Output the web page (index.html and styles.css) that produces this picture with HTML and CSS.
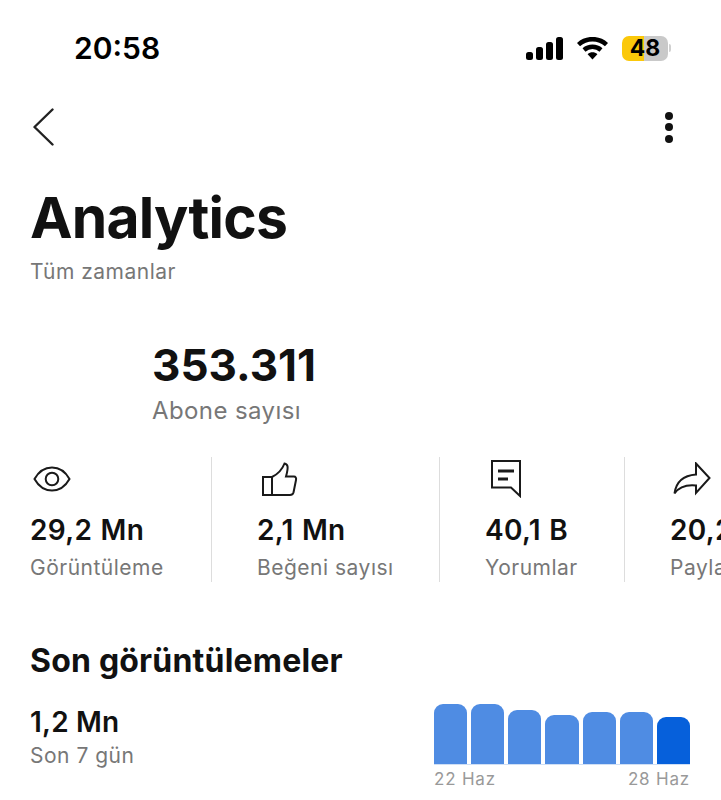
FILE: index.html
```html
<!DOCTYPE html>
<html lang="tr">
<head>
    <meta charset="UTF-8">
    <meta name="viewport" content="width=device-width, initial-scale=1.0">
    <title>Analytics</title>
    <link rel="stylesheet" href="styles.css">
</head>
<body>
    <div class="screen">
        <div class="status-bar">
            <span class="time">20:58</span>
            <div class="status-icons">
                <svg class="signal" width="37" height="23" viewBox="0 0 37 23">
                    <rect x="0" y="15" width="7" height="8" rx="2.5"/>
                    <rect x="10" y="10" width="7" height="13" rx="2.5"/>
                    <rect x="20" y="5" width="7" height="18" rx="2.5"/>
                    <rect x="30" y="0" width="7" height="23" rx="2.5"/>
                </svg>
                <svg class="wifi" width="31" height="23" viewBox="0 0 31 23">
                    <path d="M1.5 7.6C9.5 0.3 21.5 0.3 29.5 7.6" />
                    <path d="M7 13C11.8 8.8 19.2 8.8 24 13" />
                    <path class="wifi-tip" d="M10.6 17.2C13.5 14.6 17.5 14.6 20.4 17.2L15.5 22.6Z" />
                </svg>
                <div class="battery">
                    <div class="battery-body"><span class="battery-level">48</span></div>
                    <div class="battery-cap"></div>
                </div>
            </div>
        </div>

        <div class="nav-bar">
            <svg width="22" height="38" viewBox="0 0 22 38" class="back">
                <path d="M20.5 1.5L2.5 19L20.5 36.5" />
            </svg>
            <div class="more"><i></i><i></i><i></i></div>
        </div>

        <h1>Analytics</h1>
        <p class="subtitle">Tüm zamanlar</p>

        <div class="subs">
            <div class="subs-count">353.311</div>
            <div class="subs-label">Abone sayısı</div>
        </div>

        <div class="stats">
            <div class="stat">
                <div class="stat-icon icon-views">
                    <svg width="38" height="26" viewBox="0 0 38 26" class="icon">
                        <path d="M1.500 13C6 5 12 1.500 19 1.500C26 1.500 32 5 36.500 13C32 21 26 24.500 19 24.500C12 24.500 6 21 1.500 13Z" />
                        <circle cx="19" cy="13" r="6.300" />
                    </svg>
                </div>
                <div class="stat-value">29,2 Mn</div>
                <div class="stat-label">Görüntüleme</div>
            </div>
            <div class="stat">
                <div class="stat-icon icon-likes">
                    <svg width="36" height="34" viewBox="0 0 36 34" class="icon">
                        <path d="M1 15H10V33H1Z" />
                        <path d="M10 15C14 13 20 8 22.500 1.500C25.500 2 27 4 24 14.500H32C33.500 14.500 34.500 16 34 18L31.500 30.500C31 32 30 33 28 33H10" />
                    </svg>
                </div>
                <div class="stat-value">2,1 Mn</div>
                <div class="stat-label">Beğeni sayısı</div>
            </div>
            <div class="stat">
                <div class="stat-icon icon-comments">
                    <svg width="32" height="38" viewBox="0 0 32 38" class="icon">
                        <path d="M2 1H30V36L21 27.500H2Z" />
                        <path class="comment-line" d="M8 11H24M8 19H18" />
                    </svg>
                </div>
                <div class="stat-value">40,1 B</div>
                <div class="stat-label">Yorumlar</div>
            </div>
            <div class="stat">
                <div class="stat-icon icon-shares">
                    <svg width="38" height="34" viewBox="0 0 38 34" class="icon">
                        <path d="M23 1.500L36.500 16L23 31V23.500C13 22.500 6 25 1.500 31.500C3 20 10 13.500 23 12.500Z" />
                    </svg>
                </div>
                <div class="stat-value">20,2 B</div>
                <div class="stat-label">Paylaşımlar</div>
            </div>
        </div>

        <h2>Son görüntülemeler</h2>
        <div class="recent">
            <div class="recent-info">
                <div class="recent-value">1,2 Mn</div>
                <div class="recent-label">Son 7 gün</div>
            </div>
            <div class="chart">
                <div class="bars">
                    <div class="bar" style="height: 60px"></div>
                    <div class="bar" style="height: 60px"></div>
                    <div class="bar" style="height: 54px"></div>
                    <div class="bar" style="height: 49px"></div>
                    <div class="bar" style="height: 52px"></div>
                    <div class="bar" style="height: 52px"></div>
                    <div class="bar current" style="height: 47px"></div>
                </div>
                <div class="chart-dates">
                    <span>22 Haz</span>
                    <span>28 Haz</span>
                </div>
            </div>
        </div>
    </div>
</body>
</html>
```

FILE: styles.css
```css
* {
    margin: 0;
    padding: 0;
    box-sizing: border-box;
}

body {
    font-family: Inter, "Liberation Sans", sans-serif;
    background: #fff;
    color: #111;
    overflow: hidden;
}

.screen {
    width: 721px;
    height: 800px;
    overflow: hidden;
}

.status-bar {
    display: flex;
    align-items: center;
    justify-content: space-between;
    height: 96px;
    padding: 0 50px 0 74px;
}

.time {
    font-size: 30px;
    font-weight: 600;
    color: #000;
}

.status-icons {
    display: flex;
    align-items: center;
    gap: 14px;
}

.signal {
    fill: #000;
}

.wifi path {
    fill: none;
    stroke: #000;
    stroke-width: 4.5;
}

.wifi .wifi-tip {
    fill: #000;
    stroke: none;
}

.battery {
    display: flex;
    align-items: center;
    gap: 1px;
}

.battery-body {
    width: 46px;
    height: 25px;
    border-radius: 7px;
    background: linear-gradient(90deg, #fbc80a 0 48%, #c9c9c9 48% 100%);
    text-align: center;
}

.battery-level {
    font-size: 23px;
    line-height: 25px;
    font-weight: 700;
    color: #000;
    display: block;
}

.battery-cap {
    width: 2px;
    height: 8px;
    border-radius: 0 2px 2px 0;
    background: #d0d0d0;
}

.nav-bar {
    display: flex;
    align-items: center;
    justify-content: space-between;
    height: 62px;
    padding: 0 48px 0 32px;
}

.back path {
    fill: none;
    stroke: #222;
    stroke-width: 2.4;
    stroke-linecap: round;
    stroke-linejoin: round;
}

.more {
    display: flex;
    flex-direction: column;
    gap: 3.500px;
}

.more i {
    display: block;
    width: 8px;
    height: 8px;
    border-radius: 50%;
    background: #111;
}

h1 {
    font-size: 57px;
    font-weight: 700;
    line-height: 76px;
    letter-spacing: -0.8px;
    padding-left: 30px;
    margin-top: 22px;
}

.subtitle {
    font-size: 21px;
    line-height: 26px;
    letter-spacing: 0.5px;
    color: #777;
    padding-left: 30px;
    margin-top: 3px;
}

.subs {
    padding-left: 152px;
    margin-top: 53px;
}

.subs-count {
    font-size: 44px;
    line-height: 54px;
    font-weight: 700;
}

.subs-label {
    font-size: 24px;
    line-height: 30px;
    letter-spacing: 0.4px;
    color: #777;
    margin-top: 4px;
}

.stats {
    display: grid;
    grid-template-columns: 227px 228px 185px auto;
    margin-top: 31px;
    padding-left: 30px;
    white-space: nowrap;
}

.stat {
    height: 125px;
    margin-right: 45px;
    border-right: 1px solid #ddd;
}

.stat:last-child {
    margin-right: 0;
    border-right: none;
}

.stat-icon {
    height: 44px;
    display: flex;
    align-items: center;
}

.icon-views {
    padding-left: 3px;
}

.icon-likes {
    padding-left: 5px;
}

.icon-comments {
    padding-left: 5px;
}

.icon-shares {
    padding-left: 3px;
}

.icon {
    fill: none;
    stroke: #1a1a1a;
    stroke-width: 2;
}

.icon .comment-line {
    stroke-width: 3;
}

.stat-value {
    font-size: 28px;
    line-height: 36px;
    font-weight: 600;
    letter-spacing: 0.3px;
    word-spacing: 1px;
    margin-top: 11px;
}

.stat-label {
    font-size: 21px;
    line-height: 26px;
    letter-spacing: 0.5px;
    color: #777;
    margin-top: 7px;
}

h2 {
    font-size: 32px;
    line-height: 40px;
    font-weight: 700;
    letter-spacing: 0.2px;
    padding-left: 30px;
    margin-top: 59px;
}

.recent {
    display: flex;
    justify-content: space-between;
    padding: 0 31px 0 30px;
    margin-top: 3px;
}

.recent-info {
    margin-top: 20px;
}

.recent-value {
    font-size: 28px;
    line-height: 36px;
    font-weight: 600;
    letter-spacing: 0.2px;
}

.recent-label {
    font-size: 21px;
    line-height: 26px;
    letter-spacing: 0.5px;
    color: #777;
    margin-top: 3px;
}

.chart {
    width: 256px;
    margin-top: 19px;
}

.bars {
    display: flex;
    align-items: flex-end;
    gap: 4px;
    height: 62px;
    border-bottom: 1px solid #cfdff5;
}

.bar {
    flex: 1;
    border-radius: 9px 9px 0 0;
    background: #4f8ce3;
}

.bar.current {
    background: #0660db;
}

.chart-dates {
    display: flex;
    justify-content: space-between;
    font-size: 17px;
    line-height: 22px;
    letter-spacing: 0.8px;
    color: #999;
    margin-top: 3px;
}
```
